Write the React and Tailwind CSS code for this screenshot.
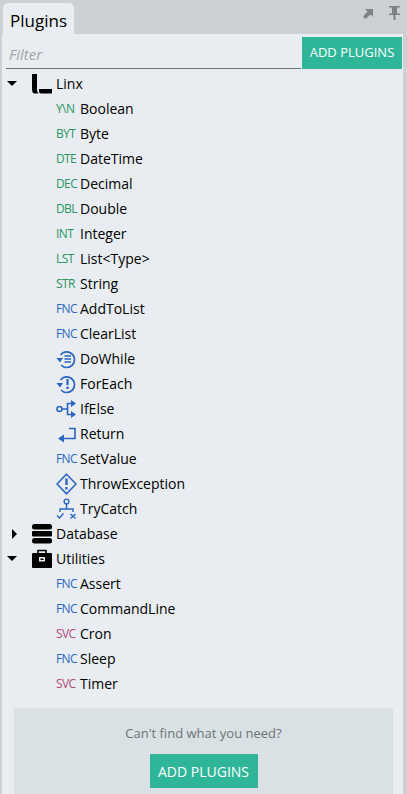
import React from 'react';

const blue = '#2a66c0';

const LoopIcon = ({ children }) => (
  <svg width="21" height="20" viewBox="0 0 21 20" fill="none" stroke={blue} strokeWidth="1.7">
    <path d="M4.500 6A7.800 7.800 0 1 1 5 16" />
    <path d="M0.500 9h6.500l-3 4.500z" fill={blue} stroke="none" />
    {children}
  </svg>
);

const DoWhileIcon = () => (
  <LoopIcon>
    <path d="M8.500 7h6.500M8.500 10h6.500M8.500 13h6.500" strokeWidth="1.400" />
  </LoopIcon>
);

const ForEachIcon = () => (
  <LoopIcon>
    <path d="M11.500 5v6" strokeWidth="2.200" />
    <path d="M11.500 12.500v2.500" strokeWidth="2.200" />
  </LoopIcon>
);

const IfElseIcon = () => (
  <svg width="21" height="20" viewBox="0 0 21 20" fill="none" stroke={blue} strokeWidth="1.600">
    <circle cx="3.500" cy="10" r="2.500" />
    <path d="M6 10h5.500M11.500 10V4.500h4M11.500 10v5.500h4" />
    <path d="M15 1l5 3.500L15 8zM15 12l5 3.500-5 3.500z" fill={blue} stroke="none" />
  </svg>
);

const ReturnIcon = () => (
  <svg width="21" height="20" viewBox="0 0 21 20" fill="none" stroke={blue} strokeWidth="1.600">
    <path d="M13 4.500h6v10H7" />
    <path d="M8 10.500v8l-6-4z" fill={blue} stroke="none" />
  </svg>
);

const ThrowIcon = () => (
  <svg width="21" height="22" viewBox="0 0 21 22" fill="none" stroke={blue} strokeWidth="1.600">
    <path d="M10.500 1.200L20 11l-9.500 9.800L1 11z" />
    <path d="M10.500 5.500v6.500" strokeWidth="2.400" />
    <path d="M10.500 14v2.500" strokeWidth="2.400" />
  </svg>
);

const TryCatchIcon = () => (
  <svg width="21" height="22" viewBox="0 0 21 22" fill="none" stroke={blue} strokeWidth="1.400">
    <circle cx="10.500" cy="3.500" r="2.400" />
    <path d="M10.500 6v5M4 14v-3h13v3" />
    <path d="M1 17.500l2.500 2.500L7.500 15.500" />
    <path d="M14.500 16l5 4.500M19.500 16l-5 4.500" />
  </svg>
);

const LinxIcon = () => (
  <svg width="20" height="20" viewBox="0 0 20 20">
    <path d="M0 0h5v15q0 3 1.500 4.500H3Q0 19.500 0 15z" fill="#000" />
    <path d="M7 15h13v4.500H9q-2 0-2-2z" fill="#000" />
  </svg>
);

const DatabaseIcon = () => (
  <svg width="20" height="20" viewBox="0 0 20 20" fill="#000">
    <rect x="0" y="0" width="20" height="5.500" rx="2.500" />
    <rect x="0" y="7" width="20" height="5.500" rx="1" />
    <rect x="0" y="14" width="20" height="5.500" rx="2.500" />
  </svg>
);

const ToolboxIcon = () => (
  <svg width="20" height="20" viewBox="0 0 20 20">
    <path d="M6 5V1.500h8V5" fill="none" stroke="#000" strokeWidth="1.600" />
    <path d="M0 5q0-1 1-1h18q1 0 1 1v13q0 1-1 1H1q-1 0-1-1z" fill="#000" />
    <rect x="7" y="8" width="6" height="4.500" fill="#e9edf1" />
    <rect x="8.500" y="9.500" width="3" height="1.500" fill="#000" />
  </svg>
);

const Badge = ({ text, color }) => (
  <span className={`text-[12px] leading-none tracking-[-0.6px] ${color}`}>{text}</span>
);

const green = 'text-[#2a9560]';
const fnc = 'text-[#2a66c0]';
const svc = 'text-[#b04a78]';

const linxItems = [
  { label: 'Boolean', badge: 'Y\\N', color: green },
  { label: 'Byte', badge: 'BYT', color: green },
  { label: 'DateTime', badge: 'DTE', color: green },
  { label: 'Decimal', badge: 'DEC', color: green },
  { label: 'Double', badge: 'DBL', color: green },
  { label: 'Integer', badge: 'INT', color: green },
  { label: 'List<Type>', badge: 'LST', color: green },
  { label: 'String', badge: 'STR', color: green },
  { label: 'AddToList', badge: 'FNC', color: fnc },
  { label: 'ClearList', badge: 'FNC', color: fnc },
  { label: 'DoWhile', icon: <DoWhileIcon /> },
  { label: 'ForEach', icon: <ForEachIcon /> },
  { label: 'IfElse', icon: <IfElseIcon /> },
  { label: 'Return', icon: <ReturnIcon /> },
  { label: 'SetValue', badge: 'FNC', color: fnc },
  { label: 'ThrowException', icon: <ThrowIcon /> },
  { label: 'TryCatch', icon: <TryCatchIcon /> },
];

const utilityItems = [
  { label: 'Assert', badge: 'FNC', color: fnc },
  { label: 'CommandLine', badge: 'FNC', color: fnc },
  { label: 'Cron', badge: 'SVC', color: svc },
  { label: 'Sleep', badge: 'FNC', color: fnc },
  { label: 'Timer', badge: 'SVC', color: svc },
];

const Leaf = ({ item }) => (
  <div className="flex items-center h-[25px] pl-[54px]">
    <div className="w-[24px] shrink-0 flex items-center">
      {item.icon || <Badge text={item.badge} color={item.color} />}
    </div>
    <span className="text-[14px] text-black">{item.label}</span>
  </div>
);

const Group = ({ label, icon, open }) => (
  <div className="flex items-center h-[25px]">
    <div className="w-[30px] pl-[5px] shrink-0 flex items-center">
      {open ? (
        <div className="w-0 h-0 border-x-[5px] border-x-transparent border-t-[5px] border-t-black" />
      ) : (
        <div className="ml-[5px] w-0 h-0 border-y-[5px] border-y-transparent border-l-[5px] border-l-black" />
      )}
    </div>
    <div className="w-[24px] shrink-0 flex items-center">{icon}</div>
    <span className="text-[14px] text-black">{label}</span>
  </div>
);

export default function App() {
  return (
    <div className="w-[407px] h-[794px] overflow-hidden flex flex-col bg-[#cdd1d4] font-['Open_Sans',sans-serif]">
      <div className="flex h-[34px] shrink-0 items-end justify-between pl-[2px]">
        <div className="ml-[1px] h-[31px] px-[7px] pt-[2px] bg-[#e9edf1] rounded-t-[5px] text-[17px] leading-[31px] text-black">
          Plugins
        </div>
        <div className="flex items-center gap-[16px] pr-[6px] pb-[13px]">
          <svg width="10" height="10" viewBox="0 0 10 10" fill="#7d8285">
            <path d="M2 0h8v8L7.500 5.500 2.500 10 0 7.500 4.500 2.500z" />
          </svg>
          <svg width="12" height="15" viewBox="0 0 12 15" fill="#7d8285">
            <path d="M0 0h11v1.500H8v6h3V9H6.500v5h-2V9H0V7.500h3v-6H0z" />
          </svg>
        </div>
      </div>
      <div className="flex-1 ml-[2px] mr-[4px] bg-[#e9edf1] flex flex-col">
        <div className="flex h-[35px] pt-[3px] pl-[4px] pr-[1px]">
          <div className="flex-1 h-[32px] border-b border-[#6f7376] flex items-center pl-[3px] pt-[4px] text-[15px] italic text-[#a2a5a8]">
            Filter
          </div>
          <button className="w-[100px] h-[32px] ml-[1px] bg-[#2fb597] text-white text-[13px]">
            ADD PLUGINS
          </button>
        </div>
        <div className="pt-[2px]">
          <Group label="Linx" icon={<LinxIcon />} open />
          {linxItems.map((item) => <Leaf key={item.label} item={item} />)}
          <Group label="Database" icon={<DatabaseIcon />} />
          <Group label="Utilities" icon={<ToolboxIcon />} open />
          {utilityItems.map((item) => <Leaf key={item.label} item={item} />)}
        </div>
        <div className="mt-[12px] ml-[12px] mr-[10px] flex-1 bg-[#d9e1e4] flex flex-col items-center pt-[15px]">
          <div className="text-[13px] text-[#6f7376] leading-[20px]">Can't find what you need?</div>
          <button className="mt-[11px] w-[108px] h-[34px] bg-[#2fb597] text-white text-[14px]">ADD PLUGINS</button>
        </div>
      </div>
    </div>
  );
}
